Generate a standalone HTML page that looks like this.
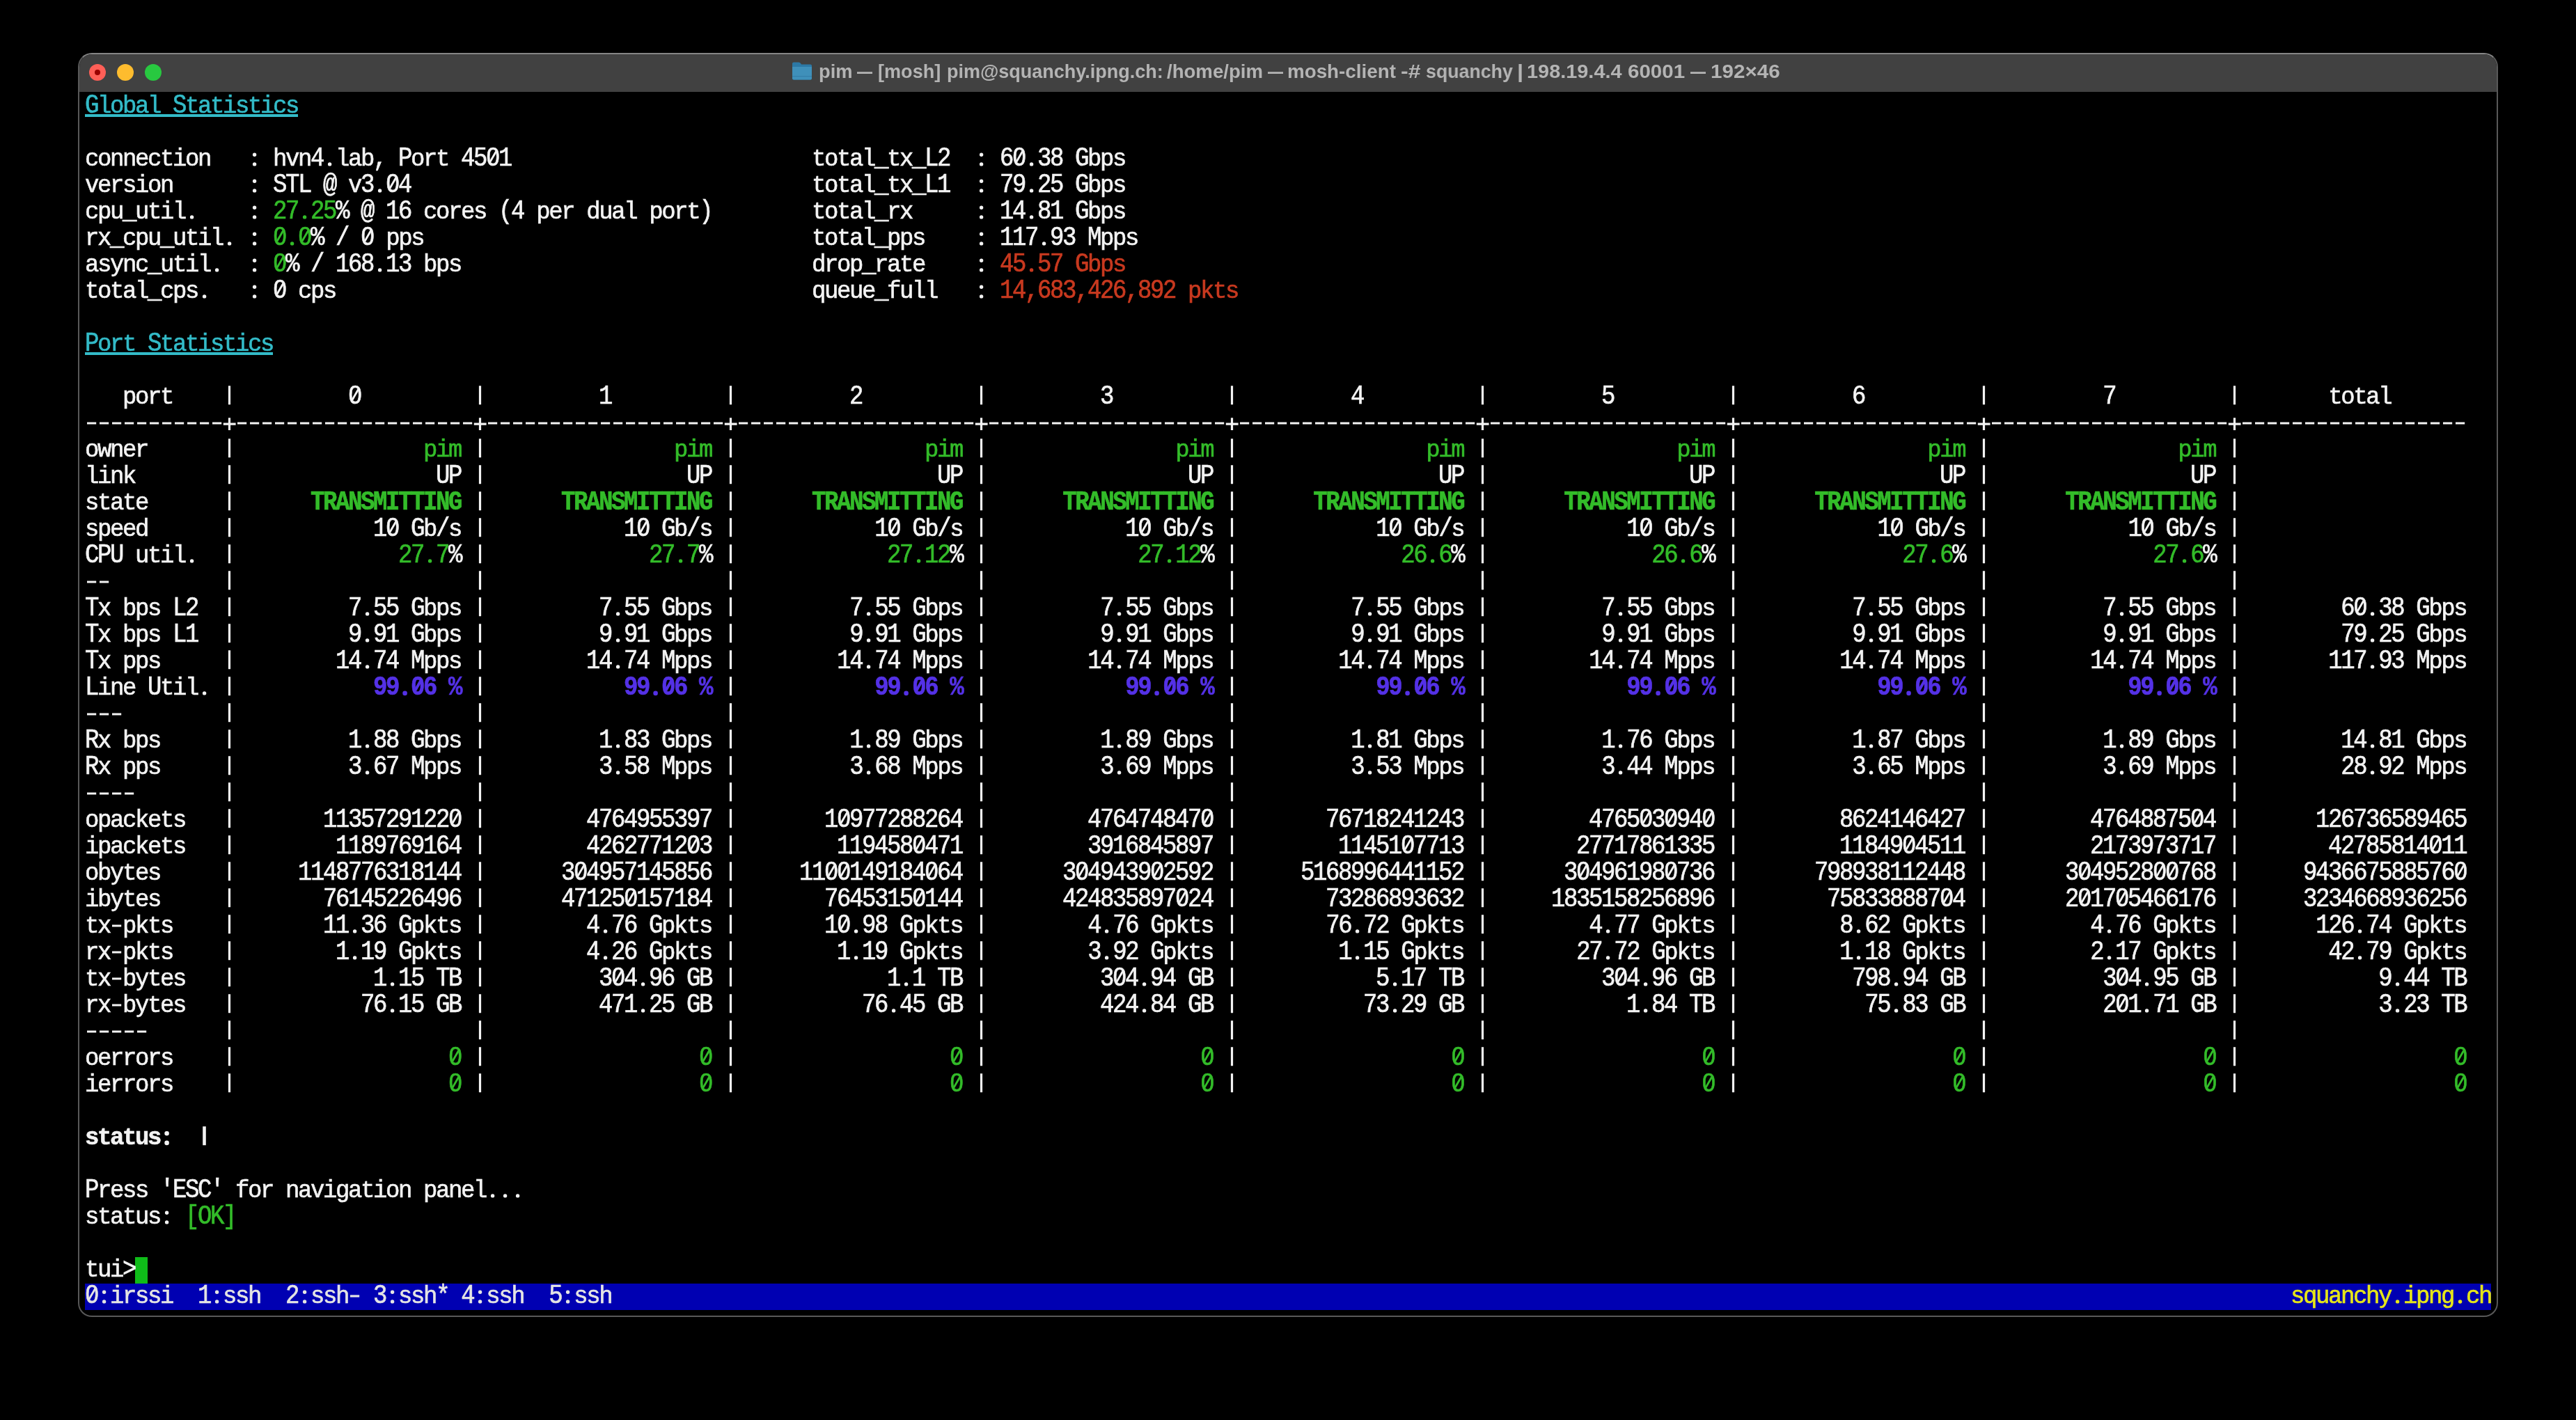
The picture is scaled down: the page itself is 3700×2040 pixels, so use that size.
<!DOCTYPE html>
<html><head><meta charset="utf-8"><title>terminal</title>
<style>
html,body{margin:0;padding:0;background:#000;}
body{width:3700px;height:2040px;position:relative;overflow:hidden;}
#win{position:absolute;left:112px;top:76px;width:3476px;height:1816px;box-sizing:border-box;border-radius:20px;background:#000;border:2px solid #585858;border-top-color:#858585;overflow:hidden;}
#tb{position:absolute;left:0;top:0;width:100%;height:54px;background:#414141;}
.tl{position:absolute;top:13.7px;width:24.4px;height:24.4px;border-radius:50%;}
.tw{position:absolute;top:80.5px;height:44px;line-height:44px;font-family:"Liberation Sans",sans-serif;font-weight:bold;font-size:27px;color:#b4b4b4;white-space:pre;transform-origin:0 0;will-change:transform;}
.r{position:absolute;height:38.0px;line-height:38.0px;font-family:"Liberation Mono",monospace;font-size:34.0px;letter-spacing:-2.4027px;color:#f3f3f3;white-space:pre;will-change:transform;-webkit-text-stroke:0.6px currentColor;transform:scaleY(1.12);transform-origin:0 28.05px;}
.r i{font-style:normal;display:inline-block;height:38.0px;line-height:38.0px;transform:scaleY(0.91);transform-origin:0 28.05px;}
.g{color:#33bc29} .c{color:#33bbc8} .rd{color:#c8391f}
.bl{color:#5431e6} .b{font-weight:bold;}
.y{color:#e6e619} .sb{color:#e4e4e4}

#bar{position:absolute;left:122px;top:1844px;width:3456px;height:38px;background:#0000b2;}
#cur{position:absolute;left:194px;top:1806px;width:18px;height:38px;background:#0fbc19;}
</style></head><body>
<div id="win"><div id="tb">
<div class="tl" style="left:13.8px;background:#ff5f57"></div>
<div class="tl" style="left:53.8px;background:#febc2e"></div>
<div class="tl" style="left:93.8px;background:#28c840"></div>
<div style="position:absolute;left:21.9px;top:21.9px;width:8px;height:8px;border-radius:50%;background:#990000"></div>
</div></div>
<svg style="position:absolute;left:1138px;top:89px" width="28" height="26" viewBox="0 0 28 26"><path d="M0 2.5Q0 0.5 2 0.5H9.5Q11 0.5 12 2L13 3.5H26Q28 3.5 28 5.5V23.5Q28 25.5 26 25.5H2Q0 25.5 0 23.5Z" fill="#2c79a6"/><path d="M0 7H28V23.5Q28 25.5 26 25.5H2Q0 25.5 0 23.5Z" fill="#3f90ba"/><rect x="0" y="20" width="28" height="1.2" fill="#347fab"/></svg>
<div class="tw" style="left:1175.68px;transform:scaleX(1.0112)">pim</div><div class="tw" style="left:1230.8px;transform:scaleX(0.8296)">—</div><div class="tw" style="left:1261.39px;transform:scaleX(1.0034)">[mosh]</div><div class="tw" style="left:1359.5px;transform:scaleX(0.9993)">pim@squanchy.ipng.ch:</div><div class="tw" style="left:1675.79px;transform:scaleX(1.0218)">/home/pim</div><div class="tw" style="left:1820.9px;transform:scaleX(0.8037)">—</div><div class="tw" style="left:1848.55px;transform:scaleX(1.0288)">mosh-client</div><div class="tw" style="left:2012.21px;transform:scaleX(1.1858)">-#</div><div class="tw" style="left:2047.81px;transform:scaleX(0.9904)">squanchy</div><div class="tw" style="left:2178.5px;transform:scaleX(1.2)">|</div><div class="tw" style="left:2193.28px;transform:scaleX(1.07)">198.19.4.4</div><div class="tw" style="left:2337.61px;transform:scaleX(1.094)">60001</div><div class="tw" style="left:2427.8px;transform:scaleX(0.8333)">—</div><div class="tw" style="left:2457.43px;transform:scaleX(1.0975)">192×46</div>
<div id="bar"></div><div id="cur"></div>
<div class="r" style="left:121.80px;top:133.70px"><span class="c u">G<i>lobal</i> S<i>tatistics</i></span></div>
<div class="r" style="left:121.80px;top:209.70px"><i>connection</i>     <i>hvn</i>4 <i>lab</i>, P<i>ort</i> 4501</div>
<div class="r" style="left:1165.80px;top:209.70px"><i>total</i>_<i>tx</i>_L2    60 38 G<i>bps</i></div>
<div class="r" style="left:121.80px;top:247.70px"><i>version</i>        STL @ <i>v</i>3 04</div>
<div class="r" style="left:1165.80px;top:247.70px"><i>total</i>_<i>tx</i>_L1    79 25 G<i>bps</i></div>
<div class="r" style="left:121.80px;top:285.70px"><i>cpu</i>_<i>util</i>       <span class="g">27 25</span>% @ 16 <i>cores</i> (4 <i>per</i> <i>dual</i> <i>port</i>)</div>
<div class="r" style="left:1165.80px;top:285.70px"><i>total</i>_<i>rx</i>       14 81 G<i>bps</i></div>
<div class="r" style="left:121.80px;top:323.70px"><i>rx</i>_<i>cpu</i>_<i>util</i>    <span class="g">0 0</span>% / 0 <i>pps</i></div>
<div class="r" style="left:1165.80px;top:323.70px"><i>total</i>_<i>pps</i>      117 93 M<i>pps</i></div>
<div class="r" style="left:121.80px;top:361.70px"><i>async</i>_<i>util</i>     <span class="g">0</span>% / 168 13 <i>bps</i></div>
<div class="r" style="left:1165.80px;top:361.70px"><i>drop</i>_<i>rate</i>      <span class="rd">45 57 G<i>bps</i></span></div>
<div class="r" style="left:121.80px;top:399.70px"><i>total</i>_<i>cps</i>      0 <i>cps</i></div>
<div class="r" style="left:1165.80px;top:399.70px"><i>queue</i>_<i>full</i>     <span class="rd">14,683,426,892 <i>pkts</i></span></div>
<div class="r" style="left:121.80px;top:475.70px"><span class="c u">P<i>ort</i> S<i>tatistics</i></span></div>
<div class="r" style="left:121.80px;top:551.70px">   <i>port</i>              0                   1                   2                   3                   4                   5                   6                   7                 <i>total</i></div>
<div class="r" style="left:121.80px;top:589.70px">                                                                                                                                                                                              </div>
<div class="r" style="left:121.80px;top:627.70px"><i>owner</i>                      <span class="g"><i>pim</i></span>                 <span class="g"><i>pim</i></span>                 <span class="g"><i>pim</i></span>                 <span class="g"><i>pim</i></span>                 <span class="g"><i>pim</i></span>                 <span class="g"><i>pim</i></span>                 <span class="g"><i>pim</i></span>                 <span class="g"><i>pim</i></span>  </div>
<div class="r" style="left:121.80px;top:665.70px"><i>link</i>                        UP                  UP                  UP                  UP                  UP                  UP                  UP                  UP  </div>
<div class="r" style="left:121.80px;top:703.70px"><i>state</i>             <span class="g b">TRANSMITTING</span>        <span class="g b">TRANSMITTING</span>        <span class="g b">TRANSMITTING</span>        <span class="g b">TRANSMITTING</span>        <span class="g b">TRANSMITTING</span>        <span class="g b">TRANSMITTING</span>        <span class="g b">TRANSMITTING</span>        <span class="g b">TRANSMITTING</span>  </div>
<div class="r" style="left:121.80px;top:741.70px"><i>speed</i>                  10 G<i>b</i>/<i>s</i>             10 G<i>b</i>/<i>s</i>             10 G<i>b</i>/<i>s</i>             10 G<i>b</i>/<i>s</i>             10 G<i>b</i>/<i>s</i>             10 G<i>b</i>/<i>s</i>             10 G<i>b</i>/<i>s</i>             10 G<i>b</i>/<i>s</i>  </div>
<div class="r" style="left:121.80px;top:779.70px">CPU <i>util</i>                 <span class="g">27 7</span>%               <span class="g">27 7</span>%              <span class="g">27 12</span>%              <span class="g">27 12</span>%               <span class="g">26 6</span>%               <span class="g">26 6</span>%               <span class="g">27 6</span>%               <span class="g">27 6</span>%  </div>
<div class="r" style="left:121.80px;top:817.70px">                                                                                                                                                                            </div>
<div class="r" style="left:121.80px;top:855.70px">T<i>x</i> <i>bps</i> L2            7 55 G<i>bps</i>           7 55 G<i>bps</i>           7 55 G<i>bps</i>           7 55 G<i>bps</i>           7 55 G<i>bps</i>           7 55 G<i>bps</i>           7 55 G<i>bps</i>           7 55 G<i>bps</i>          60 38 G<i>bps</i></div>
<div class="r" style="left:121.80px;top:893.70px">T<i>x</i> <i>bps</i> L1            9 91 G<i>bps</i>           9 91 G<i>bps</i>           9 91 G<i>bps</i>           9 91 G<i>bps</i>           9 91 G<i>bps</i>           9 91 G<i>bps</i>           9 91 G<i>bps</i>           9 91 G<i>bps</i>          79 25 G<i>bps</i></div>
<div class="r" style="left:121.80px;top:931.70px">T<i>x</i> <i>pps</i>              14 74 M<i>pps</i>          14 74 M<i>pps</i>          14 74 M<i>pps</i>          14 74 M<i>pps</i>          14 74 M<i>pps</i>          14 74 M<i>pps</i>          14 74 M<i>pps</i>          14 74 M<i>pps</i>         117 93 M<i>pps</i></div>
<div class="r" style="left:121.80px;top:969.70px">L<i>ine</i> U<i>til</i>              <span class="bl b">99 06 %</span>             <span class="bl b">99 06 %</span>             <span class="bl b">99 06 %</span>             <span class="bl b">99 06 %</span>             <span class="bl b">99 06 %</span>             <span class="bl b">99 06 %</span>             <span class="bl b">99 06 %</span>             <span class="bl b">99 06 %</span>  </div>
<div class="r" style="left:121.80px;top:1007.70px">                                                                                                                                                                            </div>
<div class="r" style="left:121.80px;top:1045.70px">R<i>x</i> <i>bps</i>               1 88 G<i>bps</i>           1 83 G<i>bps</i>           1 89 G<i>bps</i>           1 89 G<i>bps</i>           1 81 G<i>bps</i>           1 76 G<i>bps</i>           1 87 G<i>bps</i>           1 89 G<i>bps</i>          14 81 G<i>bps</i></div>
<div class="r" style="left:121.80px;top:1083.70px">R<i>x</i> <i>pps</i>               3 67 M<i>pps</i>           3 58 M<i>pps</i>           3 68 M<i>pps</i>           3 69 M<i>pps</i>           3 53 M<i>pps</i>           3 44 M<i>pps</i>           3 65 M<i>pps</i>           3 69 M<i>pps</i>          28 92 M<i>pps</i></div>
<div class="r" style="left:121.80px;top:1121.70px">                                                                                                                                                                            </div>
<div class="r" style="left:121.80px;top:1159.70px"><i>opackets</i>           11357291220          4764955397         10977288264          4764748470         76718241243          4765030940          8624146427          4764887504        126736589465</div>
<div class="r" style="left:121.80px;top:1197.70px"><i>ipackets</i>            1189769164          4262771203          1194580471          3916845897          1145107713         27717861335          1184904511          2173973717         42785814011</div>
<div class="r" style="left:121.80px;top:1235.70px"><i>obytes</i>           1148776318144        304957145856       1100149184064        304943902592       5168996441152        304961980736        798938112448        304952800768       9436675885760</div>
<div class="r" style="left:121.80px;top:1273.70px"><i>ibytes</i>             76145226496        471250157184         76453150144        424835897024         73286893632       1835158256896         75833888704        201705466176       3234668936256</div>
<div class="r" style="left:121.80px;top:1311.70px"><i>tx</i> <i>pkts</i>            11 36 G<i>pkts</i>          4 76 G<i>pkts</i>         10 98 G<i>pkts</i>          4 76 G<i>pkts</i>         76 72 G<i>pkts</i>          4 77 G<i>pkts</i>          8 62 G<i>pkts</i>          4 76 G<i>pkts</i>        126 74 G<i>pkts</i></div>
<div class="r" style="left:121.80px;top:1349.70px"><i>rx</i> <i>pkts</i>             1 19 G<i>pkts</i>          4 26 G<i>pkts</i>          1 19 G<i>pkts</i>          3 92 G<i>pkts</i>          1 15 G<i>pkts</i>         27 72 G<i>pkts</i>          1 18 G<i>pkts</i>          2 17 G<i>pkts</i>         42 79 G<i>pkts</i></div>
<div class="r" style="left:121.80px;top:1387.70px"><i>tx</i> <i>bytes</i>               1 15 TB           304 96 GB              1 1 TB           304 94 GB             5 17 TB           304 96 GB           798 94 GB           304 95 GB             9 44 TB</div>
<div class="r" style="left:121.80px;top:1425.70px"><i>rx</i> <i>bytes</i>              76 15 GB           471 25 GB            76 45 GB           424 84 GB            73 29 GB             1 84 TB            75 83 GB           201 71 GB             3 23 TB</div>
<div class="r" style="left:121.80px;top:1463.70px">                                                                                                                                                                            </div>
<div class="r" style="left:121.80px;top:1501.70px"><i>oerrors</i>                      <span class="g">0</span>                   <span class="g">0</span>                   <span class="g">0</span>                   <span class="g">0</span>                   <span class="g">0</span>                   <span class="g">0</span>                   <span class="g">0</span>                   <span class="g">0</span>                   <span class="g">0</span></div>
<div class="r" style="left:121.80px;top:1539.70px"><i>ierrors</i>                      <span class="g">0</span>                   <span class="g">0</span>                   <span class="g">0</span>                   <span class="g">0</span>                   <span class="g">0</span>                   <span class="g">0</span>                   <span class="g">0</span>                   <span class="g">0</span>                   <span class="g">0</span></div>
<div class="r" style="left:121.80px;top:1615.70px"><span class="b"><i>status</i>    </span></div>
<div class="r" style="left:121.80px;top:1691.70px">P<i>ress</i> 'ESC' <i>for</i> <i>navigation</i> <i>panel</i>   </div>
<div class="r" style="left:121.80px;top:1729.70px"><i>status</i>  <span class="g">[OK]</span></div>
<div class="r" style="left:121.80px;top:1805.70px"><i>tui</i>&gt;</div>
<div class="r" style="left:121.80px;top:1843.70px"><span class="sb">0 <i>irssi</i>  1 <i>ssh</i>  2 <i>ssh</i>  3 <i>ssh</i>* 4 <i>ssh</i>  5 <i>ssh</i></span></div>
<div class="r" style="left:3289.80px;top:1843.70px"><span class="y"><i>squanchy</i> <i>ipng</i> <i>ch</i></span></div>
<svg style="position:absolute;left:0;top:0;z-index:5" width="3700" height="2040" viewBox="0 0 3700 2040"><path fill="#33bbc8" d="M122 164h306v4h-306zM122 506h270v4h-270z"/><path fill="#f3f3f3" d="M327.9 554.2h3.2v27h-3.2zM687.9 554.2h3.2v27h-3.2zM1047.9 554.2h3.2v27h-3.2zM1407.9 554.2h3.2v27h-3.2zM1767.9 554.2h3.2v27h-3.2zM2127.9 554.2h3.2v27h-3.2zM2487.9 554.2h3.2v27h-3.2zM2847.9 554.2h3.2v27h-3.2zM3207.9 554.2h3.2v27h-3.2zM125 606.4h13.2v3.2h-13.2zM143 606.4h13.2v3.2h-13.2zM161 606.4h13.2v3.2h-13.2zM179 606.4h13.2v3.2h-13.2zM197 606.4h13.2v3.2h-13.2zM215 606.4h13.2v3.2h-13.2zM233 606.4h13.2v3.2h-13.2zM251 606.4h13.2v3.2h-13.2zM269 606.4h13.2v3.2h-13.2zM287 606.4h13.2v3.2h-13.2zM305 606.4h13.2v3.2h-13.2zM320.8 607.4h17.8v3.4h-17.8zM327.9 600.2h3.2v17.7h-3.2zM341 606.4h13.2v3.2h-13.2zM359 606.4h13.2v3.2h-13.2zM377 606.4h13.2v3.2h-13.2zM395 606.4h13.2v3.2h-13.2zM413 606.4h13.2v3.2h-13.2zM431 606.4h13.2v3.2h-13.2zM449 606.4h13.2v3.2h-13.2zM467 606.4h13.2v3.2h-13.2zM485 606.4h13.2v3.2h-13.2zM503 606.4h13.2v3.2h-13.2zM521 606.4h13.2v3.2h-13.2zM539 606.4h13.2v3.2h-13.2zM557 606.4h13.2v3.2h-13.2zM575 606.4h13.2v3.2h-13.2zM593 606.4h13.2v3.2h-13.2zM611 606.4h13.2v3.2h-13.2zM629 606.4h13.2v3.2h-13.2zM647 606.4h13.2v3.2h-13.2zM665 606.4h13.2v3.2h-13.2zM680.8 607.4h17.8v3.4h-17.8zM687.9 600.2h3.2v17.7h-3.2zM701 606.4h13.2v3.2h-13.2zM719 606.4h13.2v3.2h-13.2zM737 606.4h13.2v3.2h-13.2zM755 606.4h13.2v3.2h-13.2zM773 606.4h13.2v3.2h-13.2zM791 606.4h13.2v3.2h-13.2zM809 606.4h13.2v3.2h-13.2zM827 606.4h13.2v3.2h-13.2zM845 606.4h13.2v3.2h-13.2zM863 606.4h13.2v3.2h-13.2zM881 606.4h13.2v3.2h-13.2zM899 606.4h13.2v3.2h-13.2zM917 606.4h13.2v3.2h-13.2zM935 606.4h13.2v3.2h-13.2zM953 606.4h13.2v3.2h-13.2zM971 606.4h13.2v3.2h-13.2zM989 606.4h13.2v3.2h-13.2zM1007 606.4h13.2v3.2h-13.2zM1025 606.4h13.2v3.2h-13.2zM1040.8 607.4h17.8v3.4h-17.8zM1047.9 600.2h3.2v17.7h-3.2zM1061 606.4h13.2v3.2h-13.2zM1079 606.4h13.2v3.2h-13.2zM1097 606.4h13.2v3.2h-13.2zM1115 606.4h13.2v3.2h-13.2zM1133 606.4h13.2v3.2h-13.2zM1151 606.4h13.2v3.2h-13.2zM1169 606.4h13.2v3.2h-13.2zM1187 606.4h13.2v3.2h-13.2zM1205 606.4h13.2v3.2h-13.2zM1223 606.4h13.2v3.2h-13.2zM1241 606.4h13.2v3.2h-13.2zM1259 606.4h13.2v3.2h-13.2zM1277 606.4h13.2v3.2h-13.2zM1295 606.4h13.2v3.2h-13.2zM1313 606.4h13.2v3.2h-13.2zM1331 606.4h13.2v3.2h-13.2zM1349 606.4h13.2v3.2h-13.2zM1367 606.4h13.2v3.2h-13.2zM1385 606.4h13.2v3.2h-13.2zM1400.8 607.4h17.8v3.4h-17.8zM1407.9 600.2h3.2v17.7h-3.2zM1421 606.4h13.2v3.2h-13.2zM1439 606.4h13.2v3.2h-13.2zM1457 606.4h13.2v3.2h-13.2zM1475 606.4h13.2v3.2h-13.2zM1493 606.4h13.2v3.2h-13.2zM1511 606.4h13.2v3.2h-13.2zM1529 606.4h13.2v3.2h-13.2zM1547 606.4h13.2v3.2h-13.2zM1565 606.4h13.2v3.2h-13.2zM1583 606.4h13.2v3.2h-13.2zM1601 606.4h13.2v3.2h-13.2zM1619 606.4h13.2v3.2h-13.2zM1637 606.4h13.2v3.2h-13.2zM1655 606.4h13.2v3.2h-13.2zM1673 606.4h13.2v3.2h-13.2zM1691 606.4h13.2v3.2h-13.2zM1709 606.4h13.2v3.2h-13.2zM1727 606.4h13.2v3.2h-13.2zM1745 606.4h13.2v3.2h-13.2zM1760.8 607.4h17.8v3.4h-17.8zM1767.9 600.2h3.2v17.7h-3.2zM1781 606.4h13.2v3.2h-13.2zM1799 606.4h13.2v3.2h-13.2zM1817 606.4h13.2v3.2h-13.2zM1835 606.4h13.2v3.2h-13.2zM1853 606.4h13.2v3.2h-13.2zM1871 606.4h13.2v3.2h-13.2zM1889 606.4h13.2v3.2h-13.2zM1907 606.4h13.2v3.2h-13.2zM1925 606.4h13.2v3.2h-13.2zM1943 606.4h13.2v3.2h-13.2zM1961 606.4h13.2v3.2h-13.2zM1979 606.4h13.2v3.2h-13.2zM1997 606.4h13.2v3.2h-13.2zM2015 606.4h13.2v3.2h-13.2zM2033 606.4h13.2v3.2h-13.2zM2051 606.4h13.2v3.2h-13.2zM2069 606.4h13.2v3.2h-13.2zM2087 606.4h13.2v3.2h-13.2zM2105 606.4h13.2v3.2h-13.2zM2120.8 607.4h17.8v3.4h-17.8zM2127.9 600.2h3.2v17.7h-3.2zM2141 606.4h13.2v3.2h-13.2zM2159 606.4h13.2v3.2h-13.2zM2177 606.4h13.2v3.2h-13.2zM2195 606.4h13.2v3.2h-13.2zM2213 606.4h13.2v3.2h-13.2zM2231 606.4h13.2v3.2h-13.2zM2249 606.4h13.2v3.2h-13.2zM2267 606.4h13.2v3.2h-13.2zM2285 606.4h13.2v3.2h-13.2zM2303 606.4h13.2v3.2h-13.2zM2321 606.4h13.2v3.2h-13.2zM2339 606.4h13.2v3.2h-13.2zM2357 606.4h13.2v3.2h-13.2zM2375 606.4h13.2v3.2h-13.2zM2393 606.4h13.2v3.2h-13.2zM2411 606.4h13.2v3.2h-13.2zM2429 606.4h13.2v3.2h-13.2zM2447 606.4h13.2v3.2h-13.2zM2465 606.4h13.2v3.2h-13.2zM2480.8 607.4h17.8v3.4h-17.8zM2487.9 600.2h3.2v17.7h-3.2zM2501 606.4h13.2v3.2h-13.2zM2519 606.4h13.2v3.2h-13.2zM2537 606.4h13.2v3.2h-13.2zM2555 606.4h13.2v3.2h-13.2zM2573 606.4h13.2v3.2h-13.2zM2591 606.4h13.2v3.2h-13.2zM2609 606.4h13.2v3.2h-13.2zM2627 606.4h13.2v3.2h-13.2zM2645 606.4h13.2v3.2h-13.2zM2663 606.4h13.2v3.2h-13.2zM2681 606.4h13.2v3.2h-13.2zM2699 606.4h13.2v3.2h-13.2zM2717 606.4h13.2v3.2h-13.2zM2735 606.4h13.2v3.2h-13.2zM2753 606.4h13.2v3.2h-13.2zM2771 606.4h13.2v3.2h-13.2zM2789 606.4h13.2v3.2h-13.2zM2807 606.4h13.2v3.2h-13.2zM2825 606.4h13.2v3.2h-13.2zM2840.8 607.4h17.8v3.4h-17.8zM2847.9 600.2h3.2v17.7h-3.2zM2861 606.4h13.2v3.2h-13.2zM2879 606.4h13.2v3.2h-13.2zM2897 606.4h13.2v3.2h-13.2zM2915 606.4h13.2v3.2h-13.2zM2933 606.4h13.2v3.2h-13.2zM2951 606.4h13.2v3.2h-13.2zM2969 606.4h13.2v3.2h-13.2zM2987 606.4h13.2v3.2h-13.2zM3005 606.4h13.2v3.2h-13.2zM3023 606.4h13.2v3.2h-13.2zM3041 606.4h13.2v3.2h-13.2zM3059 606.4h13.2v3.2h-13.2zM3077 606.4h13.2v3.2h-13.2zM3095 606.4h13.2v3.2h-13.2zM3113 606.4h13.2v3.2h-13.2zM3131 606.4h13.2v3.2h-13.2zM3149 606.4h13.2v3.2h-13.2zM3167 606.4h13.2v3.2h-13.2zM3185 606.4h13.2v3.2h-13.2zM3200.8 607.4h17.8v3.4h-17.8zM3207.9 600.2h3.2v17.7h-3.2zM3221 606.4h13.2v3.2h-13.2zM3239 606.4h13.2v3.2h-13.2zM3257 606.4h13.2v3.2h-13.2zM3275 606.4h13.2v3.2h-13.2zM3293 606.4h13.2v3.2h-13.2zM3311 606.4h13.2v3.2h-13.2zM3329 606.4h13.2v3.2h-13.2zM3347 606.4h13.2v3.2h-13.2zM3365 606.4h13.2v3.2h-13.2zM3383 606.4h13.2v3.2h-13.2zM3401 606.4h13.2v3.2h-13.2zM3419 606.4h13.2v3.2h-13.2zM3437 606.4h13.2v3.2h-13.2zM3455 606.4h13.2v3.2h-13.2zM3473 606.4h13.2v3.2h-13.2zM3491 606.4h13.2v3.2h-13.2zM3509 606.4h13.2v3.2h-13.2zM3527 606.4h13.2v3.2h-13.2zM327.9 630.2h3.2v27h-3.2zM687.9 630.2h3.2v27h-3.2zM1047.9 630.2h3.2v27h-3.2zM1407.9 630.2h3.2v27h-3.2zM1767.9 630.2h3.2v27h-3.2zM2127.9 630.2h3.2v27h-3.2zM2487.9 630.2h3.2v27h-3.2zM2847.9 630.2h3.2v27h-3.2zM3207.9 630.2h3.2v27h-3.2zM327.9 668.2h3.2v27h-3.2zM687.9 668.2h3.2v27h-3.2zM1047.9 668.2h3.2v27h-3.2zM1407.9 668.2h3.2v27h-3.2zM1767.9 668.2h3.2v27h-3.2zM2127.9 668.2h3.2v27h-3.2zM2487.9 668.2h3.2v27h-3.2zM2847.9 668.2h3.2v27h-3.2zM3207.9 668.2h3.2v27h-3.2zM327.9 706.2h3.2v27h-3.2zM687.9 706.2h3.2v27h-3.2zM1047.9 706.2h3.2v27h-3.2zM1407.9 706.2h3.2v27h-3.2zM1767.9 706.2h3.2v27h-3.2zM2127.9 706.2h3.2v27h-3.2zM2487.9 706.2h3.2v27h-3.2zM2847.9 706.2h3.2v27h-3.2zM3207.9 706.2h3.2v27h-3.2zM327.9 744.2h3.2v27h-3.2zM687.9 744.2h3.2v27h-3.2zM1047.9 744.2h3.2v27h-3.2zM1407.9 744.2h3.2v27h-3.2zM1767.9 744.2h3.2v27h-3.2zM2127.9 744.2h3.2v27h-3.2zM2487.9 744.2h3.2v27h-3.2zM2847.9 744.2h3.2v27h-3.2zM3207.9 744.2h3.2v27h-3.2zM327.9 782.2h3.2v27h-3.2zM687.9 782.2h3.2v27h-3.2zM1047.9 782.2h3.2v27h-3.2zM1407.9 782.2h3.2v27h-3.2zM1767.9 782.2h3.2v27h-3.2zM2127.9 782.2h3.2v27h-3.2zM2487.9 782.2h3.2v27h-3.2zM2847.9 782.2h3.2v27h-3.2zM3207.9 782.2h3.2v27h-3.2zM125 834.4h13.2v3.2h-13.2zM143 834.4h13.2v3.2h-13.2zM327.9 820.2h3.2v27h-3.2zM687.9 820.2h3.2v27h-3.2zM1047.9 820.2h3.2v27h-3.2zM1407.9 820.2h3.2v27h-3.2zM1767.9 820.2h3.2v27h-3.2zM2127.9 820.2h3.2v27h-3.2zM2487.9 820.2h3.2v27h-3.2zM2847.9 820.2h3.2v27h-3.2zM3207.9 820.2h3.2v27h-3.2zM327.9 858.2h3.2v27h-3.2zM687.9 858.2h3.2v27h-3.2zM1047.9 858.2h3.2v27h-3.2zM1407.9 858.2h3.2v27h-3.2zM1767.9 858.2h3.2v27h-3.2zM2127.9 858.2h3.2v27h-3.2zM2487.9 858.2h3.2v27h-3.2zM2847.9 858.2h3.2v27h-3.2zM3207.9 858.2h3.2v27h-3.2zM327.9 896.2h3.2v27h-3.2zM687.9 896.2h3.2v27h-3.2zM1047.9 896.2h3.2v27h-3.2zM1407.9 896.2h3.2v27h-3.2zM1767.9 896.2h3.2v27h-3.2zM2127.9 896.2h3.2v27h-3.2zM2487.9 896.2h3.2v27h-3.2zM2847.9 896.2h3.2v27h-3.2zM3207.9 896.2h3.2v27h-3.2zM327.9 934.2h3.2v27h-3.2zM687.9 934.2h3.2v27h-3.2zM1047.9 934.2h3.2v27h-3.2zM1407.9 934.2h3.2v27h-3.2zM1767.9 934.2h3.2v27h-3.2zM2127.9 934.2h3.2v27h-3.2zM2487.9 934.2h3.2v27h-3.2zM2847.9 934.2h3.2v27h-3.2zM3207.9 934.2h3.2v27h-3.2zM327.9 972.2h3.2v27h-3.2zM687.9 972.2h3.2v27h-3.2zM1047.9 972.2h3.2v27h-3.2zM1407.9 972.2h3.2v27h-3.2zM1767.9 972.2h3.2v27h-3.2zM2127.9 972.2h3.2v27h-3.2zM2487.9 972.2h3.2v27h-3.2zM2847.9 972.2h3.2v27h-3.2zM3207.9 972.2h3.2v27h-3.2zM125 1024.4h13.2v3.2h-13.2zM143 1024.4h13.2v3.2h-13.2zM161 1024.4h13.2v3.2h-13.2zM327.9 1010.2h3.2v27h-3.2zM687.9 1010.2h3.2v27h-3.2zM1047.9 1010.2h3.2v27h-3.2zM1407.9 1010.2h3.2v27h-3.2zM1767.9 1010.2h3.2v27h-3.2zM2127.9 1010.2h3.2v27h-3.2zM2487.9 1010.2h3.2v27h-3.2zM2847.9 1010.2h3.2v27h-3.2zM3207.9 1010.2h3.2v27h-3.2zM327.9 1048.2h3.2v27h-3.2zM687.9 1048.2h3.2v27h-3.2zM1047.9 1048.2h3.2v27h-3.2zM1407.9 1048.2h3.2v27h-3.2zM1767.9 1048.2h3.2v27h-3.2zM2127.9 1048.2h3.2v27h-3.2zM2487.9 1048.2h3.2v27h-3.2zM2847.9 1048.2h3.2v27h-3.2zM3207.9 1048.2h3.2v27h-3.2zM327.9 1086.2h3.2v27h-3.2zM687.9 1086.2h3.2v27h-3.2zM1047.9 1086.2h3.2v27h-3.2zM1407.9 1086.2h3.2v27h-3.2zM1767.9 1086.2h3.2v27h-3.2zM2127.9 1086.2h3.2v27h-3.2zM2487.9 1086.2h3.2v27h-3.2zM2847.9 1086.2h3.2v27h-3.2zM3207.9 1086.2h3.2v27h-3.2zM125 1138.4h13.2v3.2h-13.2zM143 1138.4h13.2v3.2h-13.2zM161 1138.4h13.2v3.2h-13.2zM179 1138.4h13.2v3.2h-13.2zM327.9 1124.2h3.2v27h-3.2zM687.9 1124.2h3.2v27h-3.2zM1047.9 1124.2h3.2v27h-3.2zM1407.9 1124.2h3.2v27h-3.2zM1767.9 1124.2h3.2v27h-3.2zM2127.9 1124.2h3.2v27h-3.2zM2487.9 1124.2h3.2v27h-3.2zM2847.9 1124.2h3.2v27h-3.2zM3207.9 1124.2h3.2v27h-3.2zM327.9 1162.2h3.2v27h-3.2zM687.9 1162.2h3.2v27h-3.2zM1047.9 1162.2h3.2v27h-3.2zM1407.9 1162.2h3.2v27h-3.2zM1767.9 1162.2h3.2v27h-3.2zM2127.9 1162.2h3.2v27h-3.2zM2487.9 1162.2h3.2v27h-3.2zM2847.9 1162.2h3.2v27h-3.2zM3207.9 1162.2h3.2v27h-3.2zM327.9 1200.2h3.2v27h-3.2zM687.9 1200.2h3.2v27h-3.2zM1047.9 1200.2h3.2v27h-3.2zM1407.9 1200.2h3.2v27h-3.2zM1767.9 1200.2h3.2v27h-3.2zM2127.9 1200.2h3.2v27h-3.2zM2487.9 1200.2h3.2v27h-3.2zM2847.9 1200.2h3.2v27h-3.2zM3207.9 1200.2h3.2v27h-3.2zM327.9 1238.2h3.2v27h-3.2zM687.9 1238.2h3.2v27h-3.2zM1047.9 1238.2h3.2v27h-3.2zM1407.9 1238.2h3.2v27h-3.2zM1767.9 1238.2h3.2v27h-3.2zM2127.9 1238.2h3.2v27h-3.2zM2487.9 1238.2h3.2v27h-3.2zM2847.9 1238.2h3.2v27h-3.2zM3207.9 1238.2h3.2v27h-3.2zM327.9 1276.2h3.2v27h-3.2zM687.9 1276.2h3.2v27h-3.2zM1047.9 1276.2h3.2v27h-3.2zM1407.9 1276.2h3.2v27h-3.2zM1767.9 1276.2h3.2v27h-3.2zM2127.9 1276.2h3.2v27h-3.2zM2487.9 1276.2h3.2v27h-3.2zM2847.9 1276.2h3.2v27h-3.2zM3207.9 1276.2h3.2v27h-3.2zM161 1328.4h13.2v3.2h-13.2zM327.9 1314.2h3.2v27h-3.2zM687.9 1314.2h3.2v27h-3.2zM1047.9 1314.2h3.2v27h-3.2zM1407.9 1314.2h3.2v27h-3.2zM1767.9 1314.2h3.2v27h-3.2zM2127.9 1314.2h3.2v27h-3.2zM2487.9 1314.2h3.2v27h-3.2zM2847.9 1314.2h3.2v27h-3.2zM3207.9 1314.2h3.2v27h-3.2zM161 1366.4h13.2v3.2h-13.2zM327.9 1352.2h3.2v27h-3.2zM687.9 1352.2h3.2v27h-3.2zM1047.9 1352.2h3.2v27h-3.2zM1407.9 1352.2h3.2v27h-3.2zM1767.9 1352.2h3.2v27h-3.2zM2127.9 1352.2h3.2v27h-3.2zM2487.9 1352.2h3.2v27h-3.2zM2847.9 1352.2h3.2v27h-3.2zM3207.9 1352.2h3.2v27h-3.2zM161 1404.4h13.2v3.2h-13.2zM327.9 1390.2h3.2v27h-3.2zM687.9 1390.2h3.2v27h-3.2zM1047.9 1390.2h3.2v27h-3.2zM1407.9 1390.2h3.2v27h-3.2zM1767.9 1390.2h3.2v27h-3.2zM2127.9 1390.2h3.2v27h-3.2zM2487.9 1390.2h3.2v27h-3.2zM2847.9 1390.2h3.2v27h-3.2zM3207.9 1390.2h3.2v27h-3.2zM161 1442.4h13.2v3.2h-13.2zM327.9 1428.2h3.2v27h-3.2zM687.9 1428.2h3.2v27h-3.2zM1047.9 1428.2h3.2v27h-3.2zM1407.9 1428.2h3.2v27h-3.2zM1767.9 1428.2h3.2v27h-3.2zM2127.9 1428.2h3.2v27h-3.2zM2487.9 1428.2h3.2v27h-3.2zM2847.9 1428.2h3.2v27h-3.2zM3207.9 1428.2h3.2v27h-3.2zM125 1480.4h13.2v3.2h-13.2zM143 1480.4h13.2v3.2h-13.2zM161 1480.4h13.2v3.2h-13.2zM179 1480.4h13.2v3.2h-13.2zM197 1480.4h13.2v3.2h-13.2zM327.9 1466.2h3.2v27h-3.2zM687.9 1466.2h3.2v27h-3.2zM1047.9 1466.2h3.2v27h-3.2zM1407.9 1466.2h3.2v27h-3.2zM1767.9 1466.2h3.2v27h-3.2zM2127.9 1466.2h3.2v27h-3.2zM2487.9 1466.2h3.2v27h-3.2zM2847.9 1466.2h3.2v27h-3.2zM3207.9 1466.2h3.2v27h-3.2zM327.9 1504.2h3.2v27h-3.2zM687.9 1504.2h3.2v27h-3.2zM1047.9 1504.2h3.2v27h-3.2zM1407.9 1504.2h3.2v27h-3.2zM1767.9 1504.2h3.2v27h-3.2zM2127.9 1504.2h3.2v27h-3.2zM2487.9 1504.2h3.2v27h-3.2zM2847.9 1504.2h3.2v27h-3.2zM3207.9 1504.2h3.2v27h-3.2zM327.9 1542.2h3.2v27h-3.2zM687.9 1542.2h3.2v27h-3.2zM1047.9 1542.2h3.2v27h-3.2zM1407.9 1542.2h3.2v27h-3.2zM1767.9 1542.2h3.2v27h-3.2zM2127.9 1542.2h3.2v27h-3.2zM2487.9 1542.2h3.2v27h-3.2zM2847.9 1542.2h3.2v27h-3.2zM3207.9 1542.2h3.2v27h-3.2zM291.2 1618.2h4.6v27h-4.6z"/><path fill="#e4e4e4" d="M503 1860.4h13.2v3.2h-13.2z"/><path fill="#000" d="M705.2 221.2h6.3v7.2h-6.3zM1461.2 221.2h6.3v7.2h-6.3zM561.2 259.2h6.3v7.2h-6.3zM399.2 335.2h6.3v7.2h-6.3zM435.2 335.2h6.3v7.2h-6.3zM525.2 335.2h6.3v7.2h-6.3zM399.2 373.2h6.3v7.2h-6.3zM399.2 411.2h6.3v7.2h-6.3zM507.2 563.2h6.3v7.2h-6.3zM561.2 753.2h6.3v7.2h-6.3zM921.2 753.2h6.3v7.2h-6.3zM1281.2 753.2h6.3v7.2h-6.3zM1641.2 753.2h6.3v7.2h-6.3zM2001.2 753.2h6.3v7.2h-6.3zM2361.2 753.2h6.3v7.2h-6.3zM2721.2 753.2h6.3v7.2h-6.3zM3081.2 753.2h6.3v7.2h-6.3zM3387.2 867.2h6.3v7.2h-6.3zM597.4 981h6.2v7.8h-6.2zM957.4 981h6.2v7.8h-6.2zM1317.4 981h6.2v7.8h-6.2zM1677.4 981h6.2v7.8h-6.2zM2037.4 981h6.2v7.8h-6.2zM2397.4 981h6.2v7.8h-6.2zM2757.4 981h6.2v7.8h-6.2zM3117.4 981h6.2v7.8h-6.2zM651.2 1171.2h6.3v7.2h-6.3zM1209.2 1171.2h6.3v7.2h-6.3zM1731.2 1171.2h6.3v7.2h-6.3zM2361.2 1171.2h6.3v7.2h-6.3zM2397.2 1171.2h6.3v7.2h-6.3zM2451.2 1171.2h6.3v7.2h-6.3zM3153.2 1171.2h6.3v7.2h-6.3zM993.2 1209.2h6.3v7.2h-6.3zM1317.2 1209.2h6.3v7.2h-6.3zM2019.2 1209.2h6.3v7.2h-6.3zM2739.2 1209.2h6.3v7.2h-6.3zM3495.2 1209.2h6.3v7.2h-6.3zM831.2 1247.2h6.3v7.2h-6.3zM1191.2 1247.2h6.3v7.2h-6.3zM1209.2 1247.2h6.3v7.2h-6.3zM1335.2 1247.2h6.3v7.2h-6.3zM1551.2 1247.2h6.3v7.2h-6.3zM1659.2 1247.2h6.3v7.2h-6.3zM2271.2 1247.2h6.3v7.2h-6.3zM2397.2 1247.2h6.3v7.2h-6.3zM2991.2 1247.2h6.3v7.2h-6.3zM3099.2 1247.2h6.3v7.2h-6.3zM3117.2 1247.2h6.3v7.2h-6.3zM3531.2 1247.2h6.3v7.2h-6.3zM903.2 1285.2h6.3v7.2h-6.3zM1317.2 1285.2h6.3v7.2h-6.3zM1695.2 1285.2h6.3v7.2h-6.3zM2793.2 1285.2h6.3v7.2h-6.3zM2991.2 1285.2h6.3v7.2h-6.3zM3045.2 1285.2h6.3v7.2h-6.3zM1209.2 1323.2h6.3v7.2h-6.3zM885.2 1399.2h6.3v7.2h-6.3zM1605.2 1399.2h6.3v7.2h-6.3zM2325.2 1399.2h6.3v7.2h-6.3zM3045.2 1399.2h6.3v7.2h-6.3zM3045.2 1437.2h6.3v7.2h-6.3zM651.2 1513.2h6.3v7.2h-6.3zM1011.2 1513.2h6.3v7.2h-6.3zM1371.2 1513.2h6.3v7.2h-6.3zM1731.2 1513.2h6.3v7.2h-6.3zM2091.2 1513.2h6.3v7.2h-6.3zM2451.2 1513.2h6.3v7.2h-6.3zM2811.2 1513.2h6.3v7.2h-6.3zM3171.2 1513.2h6.3v7.2h-6.3zM3531.2 1513.2h6.3v7.2h-6.3zM651.2 1551.2h6.3v7.2h-6.3zM1011.2 1551.2h6.3v7.2h-6.3zM1371.2 1551.2h6.3v7.2h-6.3zM1731.2 1551.2h6.3v7.2h-6.3zM2091.2 1551.2h6.3v7.2h-6.3zM2451.2 1551.2h6.3v7.2h-6.3zM2811.2 1551.2h6.3v7.2h-6.3zM3171.2 1551.2h6.3v7.2h-6.3zM3531.2 1551.2h6.3v7.2h-6.3z"/><path fill="#0000b2" d="M129.2 1855.2h6.3v7.2h-6.3z"/><path stroke="#f3f3f3" stroke-width="2.9" fill="none" d="M703.9 232.6L712.6 217.5M1459.9 232.6L1468.6 217.5M559.9 270.6L568.6 255.5M523.9 346.6L532.6 331.5M397.9 422.6L406.6 407.5M505.9 574.6L514.6 559.5M559.9 764.6L568.6 749.5M919.9 764.6L928.6 749.5M1279.9 764.6L1288.6 749.5M1639.9 764.6L1648.6 749.5M1999.9 764.6L2008.6 749.5M2359.9 764.6L2368.6 749.5M2719.9 764.6L2728.6 749.5M3079.9 764.6L3088.6 749.5M3385.9 878.6L3394.6 863.5M649.9 1182.6L658.6 1167.5M1207.9 1182.6L1216.6 1167.5M1729.9 1182.6L1738.6 1167.5M2359.9 1182.6L2368.6 1167.5M2395.9 1182.6L2404.6 1167.5M2449.9 1182.6L2458.6 1167.5M3151.9 1182.6L3160.6 1167.5M991.9 1220.6L1000.6 1205.5M1315.9 1220.6L1324.6 1205.5M2017.9 1220.6L2026.6 1205.5M2737.9 1220.6L2746.6 1205.5M3493.9 1220.6L3502.6 1205.5M829.9 1258.6L838.6 1243.5M1189.9 1258.6L1198.6 1243.5M1207.9 1258.6L1216.6 1243.5M1333.9 1258.6L1342.6 1243.5M1549.9 1258.6L1558.6 1243.5M1657.9 1258.6L1666.6 1243.5M2269.9 1258.6L2278.6 1243.5M2395.9 1258.6L2404.6 1243.5M2989.9 1258.6L2998.6 1243.5M3097.9 1258.6L3106.6 1243.5M3115.9 1258.6L3124.6 1243.5M3529.9 1258.6L3538.6 1243.5M901.9 1296.6L910.6 1281.5M1315.9 1296.6L1324.6 1281.5M1693.9 1296.6L1702.6 1281.5M2791.9 1296.6L2800.6 1281.5M2989.9 1296.6L2998.6 1281.5M3043.9 1296.6L3052.6 1281.5M1207.9 1334.6L1216.6 1319.5M883.9 1410.6L892.6 1395.5M1603.9 1410.6L1612.6 1395.5M2323.9 1410.6L2332.6 1395.5M3043.9 1410.6L3052.6 1395.5M3043.9 1448.6L3052.6 1433.5"/><path stroke="#33bc29" stroke-width="2.9" fill="none" d="M397.9 346.6L406.6 331.5M433.9 346.6L442.6 331.5M397.9 384.6L406.6 369.5M649.9 1524.6L658.6 1509.5M1009.9 1524.6L1018.6 1509.5M1369.9 1524.6L1378.6 1509.5M1729.9 1524.6L1738.6 1509.5M2089.9 1524.6L2098.6 1509.5M2449.9 1524.6L2458.6 1509.5M2809.9 1524.6L2818.6 1509.5M3169.9 1524.6L3178.6 1509.5M3529.9 1524.6L3538.6 1509.5M649.9 1562.6L658.6 1547.5M1009.9 1562.6L1018.6 1547.5M1369.9 1562.6L1378.6 1547.5M1729.9 1562.6L1738.6 1547.5M2089.9 1562.6L2098.6 1547.5M2449.9 1562.6L2458.6 1547.5M2809.9 1562.6L2818.6 1547.5M3169.9 1562.6L3178.6 1547.5M3529.9 1562.6L3538.6 1547.5"/><path stroke="#5431e6" stroke-width="4.0" fill="none" d="M596.6 991.6L604 978.6M956.6 991.6L964 978.6M1316.6 991.6L1324 978.6M1676.6 991.6L1684 978.6M2036.6 991.6L2044 978.6M2396.6 991.6L2404 978.6M2756.6 991.6L2764 978.6M3116.6 991.6L3124 978.6"/><path stroke="#e4e4e4" stroke-width="2.9" fill="none" d="M127.9 1866.6L136.6 1851.5"/><path fill="#f3f3f3" d="M362.9 235.9a2.7 2.7 0 1 0 5.4 0a2.7 2.7 0 1 0 -5.4 0M362.9 222.3a2.7 2.7 0 1 0 5.4 0a2.7 2.7 0 1 0 -5.4 0M470.9 235.9a2.7 2.7 0 1 0 5.4 0a2.7 2.7 0 1 0 -5.4 0M1406.9 235.9a2.7 2.7 0 1 0 5.4 0a2.7 2.7 0 1 0 -5.4 0M1406.9 222.3a2.7 2.7 0 1 0 5.4 0a2.7 2.7 0 1 0 -5.4 0M1478.9 235.9a2.7 2.7 0 1 0 5.4 0a2.7 2.7 0 1 0 -5.4 0M362.9 273.9a2.7 2.7 0 1 0 5.4 0a2.7 2.7 0 1 0 -5.4 0M362.9 260.3a2.7 2.7 0 1 0 5.4 0a2.7 2.7 0 1 0 -5.4 0M542.9 273.9a2.7 2.7 0 1 0 5.4 0a2.7 2.7 0 1 0 -5.4 0M1406.9 273.9a2.7 2.7 0 1 0 5.4 0a2.7 2.7 0 1 0 -5.4 0M1406.9 260.3a2.7 2.7 0 1 0 5.4 0a2.7 2.7 0 1 0 -5.4 0M1478.9 273.9a2.7 2.7 0 1 0 5.4 0a2.7 2.7 0 1 0 -5.4 0M272.9 311.9a2.7 2.7 0 1 0 5.4 0a2.7 2.7 0 1 0 -5.4 0M362.9 311.9a2.7 2.7 0 1 0 5.4 0a2.7 2.7 0 1 0 -5.4 0M362.9 298.3a2.7 2.7 0 1 0 5.4 0a2.7 2.7 0 1 0 -5.4 0M1406.9 311.9a2.7 2.7 0 1 0 5.4 0a2.7 2.7 0 1 0 -5.4 0M1406.9 298.3a2.7 2.7 0 1 0 5.4 0a2.7 2.7 0 1 0 -5.4 0M1478.9 311.9a2.7 2.7 0 1 0 5.4 0a2.7 2.7 0 1 0 -5.4 0M326.9 349.9a2.7 2.7 0 1 0 5.4 0a2.7 2.7 0 1 0 -5.4 0M362.9 349.9a2.7 2.7 0 1 0 5.4 0a2.7 2.7 0 1 0 -5.4 0M362.9 336.3a2.7 2.7 0 1 0 5.4 0a2.7 2.7 0 1 0 -5.4 0M1406.9 349.9a2.7 2.7 0 1 0 5.4 0a2.7 2.7 0 1 0 -5.4 0M1406.9 336.3a2.7 2.7 0 1 0 5.4 0a2.7 2.7 0 1 0 -5.4 0M1496.9 349.9a2.7 2.7 0 1 0 5.4 0a2.7 2.7 0 1 0 -5.4 0M308.9 387.9a2.7 2.7 0 1 0 5.4 0a2.7 2.7 0 1 0 -5.4 0M362.9 387.9a2.7 2.7 0 1 0 5.4 0a2.7 2.7 0 1 0 -5.4 0M362.9 374.3a2.7 2.7 0 1 0 5.4 0a2.7 2.7 0 1 0 -5.4 0M542.9 387.9a2.7 2.7 0 1 0 5.4 0a2.7 2.7 0 1 0 -5.4 0M1406.9 387.9a2.7 2.7 0 1 0 5.4 0a2.7 2.7 0 1 0 -5.4 0M1406.9 374.3a2.7 2.7 0 1 0 5.4 0a2.7 2.7 0 1 0 -5.4 0M290.9 425.9a2.7 2.7 0 1 0 5.4 0a2.7 2.7 0 1 0 -5.4 0M362.9 425.9a2.7 2.7 0 1 0 5.4 0a2.7 2.7 0 1 0 -5.4 0M362.9 412.3a2.7 2.7 0 1 0 5.4 0a2.7 2.7 0 1 0 -5.4 0M1406.9 425.9a2.7 2.7 0 1 0 5.4 0a2.7 2.7 0 1 0 -5.4 0M1406.9 412.3a2.7 2.7 0 1 0 5.4 0a2.7 2.7 0 1 0 -5.4 0M272.9 805.9a2.7 2.7 0 1 0 5.4 0a2.7 2.7 0 1 0 -5.4 0M524.9 881.9a2.7 2.7 0 1 0 5.4 0a2.7 2.7 0 1 0 -5.4 0M884.9 881.9a2.7 2.7 0 1 0 5.4 0a2.7 2.7 0 1 0 -5.4 0M1244.9 881.9a2.7 2.7 0 1 0 5.4 0a2.7 2.7 0 1 0 -5.4 0M1604.9 881.9a2.7 2.7 0 1 0 5.4 0a2.7 2.7 0 1 0 -5.4 0M1964.9 881.9a2.7 2.7 0 1 0 5.4 0a2.7 2.7 0 1 0 -5.4 0M2324.9 881.9a2.7 2.7 0 1 0 5.4 0a2.7 2.7 0 1 0 -5.4 0M2684.9 881.9a2.7 2.7 0 1 0 5.4 0a2.7 2.7 0 1 0 -5.4 0M3044.9 881.9a2.7 2.7 0 1 0 5.4 0a2.7 2.7 0 1 0 -5.4 0M3404.9 881.9a2.7 2.7 0 1 0 5.4 0a2.7 2.7 0 1 0 -5.4 0M524.9 919.9a2.7 2.7 0 1 0 5.4 0a2.7 2.7 0 1 0 -5.4 0M884.9 919.9a2.7 2.7 0 1 0 5.4 0a2.7 2.7 0 1 0 -5.4 0M1244.9 919.9a2.7 2.7 0 1 0 5.4 0a2.7 2.7 0 1 0 -5.4 0M1604.9 919.9a2.7 2.7 0 1 0 5.4 0a2.7 2.7 0 1 0 -5.4 0M1964.9 919.9a2.7 2.7 0 1 0 5.4 0a2.7 2.7 0 1 0 -5.4 0M2324.9 919.9a2.7 2.7 0 1 0 5.4 0a2.7 2.7 0 1 0 -5.4 0M2684.9 919.9a2.7 2.7 0 1 0 5.4 0a2.7 2.7 0 1 0 -5.4 0M3044.9 919.9a2.7 2.7 0 1 0 5.4 0a2.7 2.7 0 1 0 -5.4 0M3404.9 919.9a2.7 2.7 0 1 0 5.4 0a2.7 2.7 0 1 0 -5.4 0M524.9 957.9a2.7 2.7 0 1 0 5.4 0a2.7 2.7 0 1 0 -5.4 0M884.9 957.9a2.7 2.7 0 1 0 5.4 0a2.7 2.7 0 1 0 -5.4 0M1244.9 957.9a2.7 2.7 0 1 0 5.4 0a2.7 2.7 0 1 0 -5.4 0M1604.9 957.9a2.7 2.7 0 1 0 5.4 0a2.7 2.7 0 1 0 -5.4 0M1964.9 957.9a2.7 2.7 0 1 0 5.4 0a2.7 2.7 0 1 0 -5.4 0M2324.9 957.9a2.7 2.7 0 1 0 5.4 0a2.7 2.7 0 1 0 -5.4 0M2684.9 957.9a2.7 2.7 0 1 0 5.4 0a2.7 2.7 0 1 0 -5.4 0M3044.9 957.9a2.7 2.7 0 1 0 5.4 0a2.7 2.7 0 1 0 -5.4 0M3404.9 957.9a2.7 2.7 0 1 0 5.4 0a2.7 2.7 0 1 0 -5.4 0M290.9 995.9a2.7 2.7 0 1 0 5.4 0a2.7 2.7 0 1 0 -5.4 0M524.9 1071.9a2.7 2.7 0 1 0 5.4 0a2.7 2.7 0 1 0 -5.4 0M884.9 1071.9a2.7 2.7 0 1 0 5.4 0a2.7 2.7 0 1 0 -5.4 0M1244.9 1071.9a2.7 2.7 0 1 0 5.4 0a2.7 2.7 0 1 0 -5.4 0M1604.9 1071.9a2.7 2.7 0 1 0 5.4 0a2.7 2.7 0 1 0 -5.4 0M1964.9 1071.9a2.7 2.7 0 1 0 5.4 0a2.7 2.7 0 1 0 -5.4 0M2324.9 1071.9a2.7 2.7 0 1 0 5.4 0a2.7 2.7 0 1 0 -5.4 0M2684.9 1071.9a2.7 2.7 0 1 0 5.4 0a2.7 2.7 0 1 0 -5.4 0M3044.9 1071.9a2.7 2.7 0 1 0 5.4 0a2.7 2.7 0 1 0 -5.4 0M3404.9 1071.9a2.7 2.7 0 1 0 5.4 0a2.7 2.7 0 1 0 -5.4 0M524.9 1109.9a2.7 2.7 0 1 0 5.4 0a2.7 2.7 0 1 0 -5.4 0M884.9 1109.9a2.7 2.7 0 1 0 5.4 0a2.7 2.7 0 1 0 -5.4 0M1244.9 1109.9a2.7 2.7 0 1 0 5.4 0a2.7 2.7 0 1 0 -5.4 0M1604.9 1109.9a2.7 2.7 0 1 0 5.4 0a2.7 2.7 0 1 0 -5.4 0M1964.9 1109.9a2.7 2.7 0 1 0 5.4 0a2.7 2.7 0 1 0 -5.4 0M2324.9 1109.9a2.7 2.7 0 1 0 5.4 0a2.7 2.7 0 1 0 -5.4 0M2684.9 1109.9a2.7 2.7 0 1 0 5.4 0a2.7 2.7 0 1 0 -5.4 0M3044.9 1109.9a2.7 2.7 0 1 0 5.4 0a2.7 2.7 0 1 0 -5.4 0M3404.9 1109.9a2.7 2.7 0 1 0 5.4 0a2.7 2.7 0 1 0 -5.4 0M506.9 1337.9a2.7 2.7 0 1 0 5.4 0a2.7 2.7 0 1 0 -5.4 0M866.9 1337.9a2.7 2.7 0 1 0 5.4 0a2.7 2.7 0 1 0 -5.4 0M1226.9 1337.9a2.7 2.7 0 1 0 5.4 0a2.7 2.7 0 1 0 -5.4 0M1586.9 1337.9a2.7 2.7 0 1 0 5.4 0a2.7 2.7 0 1 0 -5.4 0M1946.9 1337.9a2.7 2.7 0 1 0 5.4 0a2.7 2.7 0 1 0 -5.4 0M2306.9 1337.9a2.7 2.7 0 1 0 5.4 0a2.7 2.7 0 1 0 -5.4 0M2666.9 1337.9a2.7 2.7 0 1 0 5.4 0a2.7 2.7 0 1 0 -5.4 0M3026.9 1337.9a2.7 2.7 0 1 0 5.4 0a2.7 2.7 0 1 0 -5.4 0M3386.9 1337.9a2.7 2.7 0 1 0 5.4 0a2.7 2.7 0 1 0 -5.4 0M506.9 1375.9a2.7 2.7 0 1 0 5.4 0a2.7 2.7 0 1 0 -5.4 0M866.9 1375.9a2.7 2.7 0 1 0 5.4 0a2.7 2.7 0 1 0 -5.4 0M1226.9 1375.9a2.7 2.7 0 1 0 5.4 0a2.7 2.7 0 1 0 -5.4 0M1586.9 1375.9a2.7 2.7 0 1 0 5.4 0a2.7 2.7 0 1 0 -5.4 0M1946.9 1375.9a2.7 2.7 0 1 0 5.4 0a2.7 2.7 0 1 0 -5.4 0M2306.9 1375.9a2.7 2.7 0 1 0 5.4 0a2.7 2.7 0 1 0 -5.4 0M2666.9 1375.9a2.7 2.7 0 1 0 5.4 0a2.7 2.7 0 1 0 -5.4 0M3026.9 1375.9a2.7 2.7 0 1 0 5.4 0a2.7 2.7 0 1 0 -5.4 0M3386.9 1375.9a2.7 2.7 0 1 0 5.4 0a2.7 2.7 0 1 0 -5.4 0M560.9 1413.9a2.7 2.7 0 1 0 5.4 0a2.7 2.7 0 1 0 -5.4 0M920.9 1413.9a2.7 2.7 0 1 0 5.4 0a2.7 2.7 0 1 0 -5.4 0M1298.9 1413.9a2.7 2.7 0 1 0 5.4 0a2.7 2.7 0 1 0 -5.4 0M1640.9 1413.9a2.7 2.7 0 1 0 5.4 0a2.7 2.7 0 1 0 -5.4 0M2000.9 1413.9a2.7 2.7 0 1 0 5.4 0a2.7 2.7 0 1 0 -5.4 0M2360.9 1413.9a2.7 2.7 0 1 0 5.4 0a2.7 2.7 0 1 0 -5.4 0M2720.9 1413.9a2.7 2.7 0 1 0 5.4 0a2.7 2.7 0 1 0 -5.4 0M3080.9 1413.9a2.7 2.7 0 1 0 5.4 0a2.7 2.7 0 1 0 -5.4 0M3440.9 1413.9a2.7 2.7 0 1 0 5.4 0a2.7 2.7 0 1 0 -5.4 0M560.9 1451.9a2.7 2.7 0 1 0 5.4 0a2.7 2.7 0 1 0 -5.4 0M920.9 1451.9a2.7 2.7 0 1 0 5.4 0a2.7 2.7 0 1 0 -5.4 0M1280.9 1451.9a2.7 2.7 0 1 0 5.4 0a2.7 2.7 0 1 0 -5.4 0M1640.9 1451.9a2.7 2.7 0 1 0 5.4 0a2.7 2.7 0 1 0 -5.4 0M2000.9 1451.9a2.7 2.7 0 1 0 5.4 0a2.7 2.7 0 1 0 -5.4 0M2360.9 1451.9a2.7 2.7 0 1 0 5.4 0a2.7 2.7 0 1 0 -5.4 0M2720.9 1451.9a2.7 2.7 0 1 0 5.4 0a2.7 2.7 0 1 0 -5.4 0M3080.9 1451.9a2.7 2.7 0 1 0 5.4 0a2.7 2.7 0 1 0 -5.4 0M3440.9 1451.9a2.7 2.7 0 1 0 5.4 0a2.7 2.7 0 1 0 -5.4 0M236.3 1641.9a3.3 3.3 0 1 0 6.6 0a3.3 3.3 0 1 0 -6.6 0M236.3 1628.3a3.3 3.3 0 1 0 6.6 0a3.3 3.3 0 1 0 -6.6 0M704.9 1717.9a2.7 2.7 0 1 0 5.4 0a2.7 2.7 0 1 0 -5.4 0M722.9 1717.9a2.7 2.7 0 1 0 5.4 0a2.7 2.7 0 1 0 -5.4 0M740.9 1717.9a2.7 2.7 0 1 0 5.4 0a2.7 2.7 0 1 0 -5.4 0M236.9 1755.9a2.7 2.7 0 1 0 5.4 0a2.7 2.7 0 1 0 -5.4 0M236.9 1742.3a2.7 2.7 0 1 0 5.4 0a2.7 2.7 0 1 0 -5.4 0"/><path fill="#33bc29" d="M434.9 311.9a2.7 2.7 0 1 0 5.4 0a2.7 2.7 0 1 0 -5.4 0M416.9 349.9a2.7 2.7 0 1 0 5.4 0a2.7 2.7 0 1 0 -5.4 0M614.9 805.9a2.7 2.7 0 1 0 5.4 0a2.7 2.7 0 1 0 -5.4 0M974.9 805.9a2.7 2.7 0 1 0 5.4 0a2.7 2.7 0 1 0 -5.4 0M1316.9 805.9a2.7 2.7 0 1 0 5.4 0a2.7 2.7 0 1 0 -5.4 0M1676.9 805.9a2.7 2.7 0 1 0 5.4 0a2.7 2.7 0 1 0 -5.4 0M2054.9 805.9a2.7 2.7 0 1 0 5.4 0a2.7 2.7 0 1 0 -5.4 0M2414.9 805.9a2.7 2.7 0 1 0 5.4 0a2.7 2.7 0 1 0 -5.4 0M2774.9 805.9a2.7 2.7 0 1 0 5.4 0a2.7 2.7 0 1 0 -5.4 0M3134.9 805.9a2.7 2.7 0 1 0 5.4 0a2.7 2.7 0 1 0 -5.4 0"/><path fill="#c8391f" d="M1478.9 387.9a2.7 2.7 0 1 0 5.4 0a2.7 2.7 0 1 0 -5.4 0"/><path fill="#5431e6" d="M578.3 995.9a3.3 3.3 0 1 0 6.6 0a3.3 3.3 0 1 0 -6.6 0M938.3 995.9a3.3 3.3 0 1 0 6.6 0a3.3 3.3 0 1 0 -6.6 0M1298.3 995.9a3.3 3.3 0 1 0 6.6 0a3.3 3.3 0 1 0 -6.6 0M1658.3 995.9a3.3 3.3 0 1 0 6.6 0a3.3 3.3 0 1 0 -6.6 0M2018.3 995.9a3.3 3.3 0 1 0 6.6 0a3.3 3.3 0 1 0 -6.6 0M2378.3 995.9a3.3 3.3 0 1 0 6.6 0a3.3 3.3 0 1 0 -6.6 0M2738.3 995.9a3.3 3.3 0 1 0 6.6 0a3.3 3.3 0 1 0 -6.6 0M3098.3 995.9a3.3 3.3 0 1 0 6.6 0a3.3 3.3 0 1 0 -6.6 0"/><path fill="#e4e4e4" d="M146.9 1869.9a2.7 2.7 0 1 0 5.4 0a2.7 2.7 0 1 0 -5.4 0M146.9 1856.3a2.7 2.7 0 1 0 5.4 0a2.7 2.7 0 1 0 -5.4 0M308.9 1869.9a2.7 2.7 0 1 0 5.4 0a2.7 2.7 0 1 0 -5.4 0M308.9 1856.3a2.7 2.7 0 1 0 5.4 0a2.7 2.7 0 1 0 -5.4 0M434.9 1869.9a2.7 2.7 0 1 0 5.4 0a2.7 2.7 0 1 0 -5.4 0M434.9 1856.3a2.7 2.7 0 1 0 5.4 0a2.7 2.7 0 1 0 -5.4 0M560.9 1869.9a2.7 2.7 0 1 0 5.4 0a2.7 2.7 0 1 0 -5.4 0M560.9 1856.3a2.7 2.7 0 1 0 5.4 0a2.7 2.7 0 1 0 -5.4 0M686.9 1869.9a2.7 2.7 0 1 0 5.4 0a2.7 2.7 0 1 0 -5.4 0M686.9 1856.3a2.7 2.7 0 1 0 5.4 0a2.7 2.7 0 1 0 -5.4 0M812.9 1869.9a2.7 2.7 0 1 0 5.4 0a2.7 2.7 0 1 0 -5.4 0M812.9 1856.3a2.7 2.7 0 1 0 5.4 0a2.7 2.7 0 1 0 -5.4 0"/><path fill="#e6e619" d="M3440.9 1869.9a2.7 2.7 0 1 0 5.4 0a2.7 2.7 0 1 0 -5.4 0M3530.9 1869.9a2.7 2.7 0 1 0 5.4 0a2.7 2.7 0 1 0 -5.4 0"/></svg>
</body></html>
